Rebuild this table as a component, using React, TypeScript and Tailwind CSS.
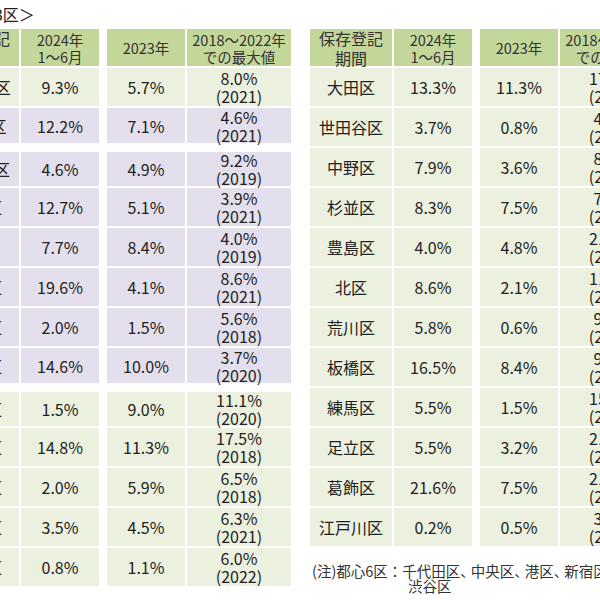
import React from 'react';

type Row = {
  name: string;
  a: string;
  b: string;
  max: string;
  year: string;
  tone: 'g' | 'p';
  size: string;
};

const left: Row[] = [
  { name: '東京23区', a: '9.3%', b: '5.7%', max: '8.0%', year: '2021', tone: 'g', size: 'h-[38px] mt-[2px]' },
  { name: '都心6区', a: '12.2%', b: '7.1%', max: '4.6%', year: '2021', tone: 'p', size: 'h-[35px] mt-[2px]' },
  { name: '千代田区', a: '4.6%', b: '4.9%', max: '9.2%', year: '2019', tone: 'p', size: 'h-[34px] mt-[9px]' },
  { name: '中央区', a: '12.7%', b: '5.1%', max: '3.9%', year: '2021', tone: 'p', size: 'h-[38px] mt-[2px]' },
  { name: '港区', a: '7.7%', b: '8.4%', max: '4.0%', year: '2019', tone: 'p', size: 'h-[38px] mt-[2px]' },
  { name: '新宿区', a: '19.6%', b: '4.1%', max: '8.6%', year: '2021', tone: 'p', size: 'h-[38px] mt-[2px]' },
  { name: '文京区', a: '2.0%', b: '1.5%', max: '5.6%', year: '2018', tone: 'p', size: 'h-[38px] mt-[2px]' },
  { name: '渋谷区', a: '14.6%', b: '10.0%', max: '3.7%', year: '2020', tone: 'p', size: 'h-[35px] mt-[2px]' },
  { name: '台東区', a: '1.5%', b: '9.0%', max: '11.1%', year: '2020', tone: 'g', size: 'h-[34px] mt-[9px]' },
  { name: '墨田区', a: '14.8%', b: '11.3%', max: '17.5%', year: '2018', tone: 'g', size: 'h-[38px] mt-[2px]' },
  { name: '江東区', a: '2.0%', b: '5.9%', max: '6.5%', year: '2018', tone: 'g', size: 'h-[38px] mt-[2px]' },
  { name: '品川区', a: '3.5%', b: '4.5%', max: '6.3%', year: '2021', tone: 'g', size: 'h-[38px] mt-[2px]' },
  { name: '目黒区', a: '0.8%', b: '1.1%', max: '6.0%', year: '2022', tone: 'g', size: 'h-[38px] mt-[2px]' },
];

const std = 'h-[38px] mt-[2px]';

const right: Row[] = [
  { name: '大田区', a: '13.3%', b: '11.3%', max: '17.3%', year: '2018', tone: 'g', size: std },
  { name: '世田谷区', a: '3.7%', b: '0.8%', max: '4.4%', year: '2019', tone: 'g', size: std },
  { name: '中野区', a: '7.9%', b: '3.6%', max: '8.2%', year: '2021', tone: 'g', size: std },
  { name: '杉並区', a: '8.3%', b: '7.5%', max: '7.6%', year: '2019', tone: 'g', size: std },
  { name: '豊島区', a: '4.0%', b: '4.8%', max: '21.2%', year: '2018', tone: 'g', size: std },
  { name: '北区', a: '8.6%', b: '2.1%', max: '11.5%', year: '2020', tone: 'g', size: std },
  { name: '荒川区', a: '5.8%', b: '0.6%', max: '9.8%', year: '2021', tone: 'g', size: std },
  { name: '板橋区', a: '16.5%', b: '8.4%', max: '9.4%', year: '2018', tone: 'g', size: std },
  { name: '練馬区', a: '5.5%', b: '1.5%', max: '15.1%', year: '2019', tone: 'g', size: std },
  { name: '足立区', a: '5.5%', b: '3.2%', max: '21.8%', year: '2019', tone: 'g', size: std },
  { name: '葛飾区', a: '21.6%', b: '7.5%', max: '21.0%', year: '2020', tone: 'g', size: std },
  { name: '江戸川区', a: '0.2%', b: '0.5%', max: '3.3%', year: '2018', tone: 'g', size: std },
];

const wards = ['千代田区', '中央区', '港区', '新宿区', '文京区'];

function Header() {
  const cell = 'bg-[#c4d79b] flex flex-col items-center justify-center text-[#333] whitespace-nowrap';
  return (
    <div className="flex h-[37px]">
      <div className={`${cell} w-[82px] text-[16px] leading-[20px]`}>
        <span>保存登記</span>
        <span>期間</span>
      </div>
      <div className={`${cell} ml-[2px] w-[78px] text-[14.5px] leading-[17px]`}>
        <span>2024年</span>
        <span>1～6月</span>
      </div>
      <div className={`${cell} ml-[8px] w-[78px] text-[14.5px] leading-[17px]`}>
        <span>2023年</span>
      </div>
      <div className={`${cell} ml-[2px] w-[104px] text-[14.5px] leading-[17px]`}>
        <span>2018～2022年</span>
        <span>での最大値</span>
      </div>
    </div>
  );
}

function TableRow({ row }: { row: Row }) {
  const bg = row.tone === 'g' ? 'bg-[#ebf1de]' : 'bg-[#e4dfec]';
  const cell = `${bg} flex items-center justify-center whitespace-nowrap text-[16px]`;
  return (
    <div className={`flex ${row.size}`}>
      <div className={`${cell} w-[82px]`}>{row.name}</div>
      <div className={`${cell} ml-[2px] w-[78px]`}>{row.a}</div>
      <div className={`${cell} ml-[8px] w-[78px]`}>{row.b}</div>
      <div className={`${cell} ml-[2px] w-[104px] flex-col leading-[18px]`}>
        <span>{row.max}</span>
        <span>({row.year})</span>
      </div>
    </div>
  );
}

function Table({ rows, children }: { rows: Row[]; children?: React.ReactNode }) {
  return (
    <div className="flex flex-col w-[354px] shrink-0">
      <Header />
      {rows.map((r) => (
        <TableRow key={r.name} row={r} />
      ))}
      {children}
    </div>
  );
}

export default function App() {
  return (
    <div className="w-[600px] h-[600px] overflow-hidden bg-white text-[#222] font-['Noto_Sans_CJK_JP',sans-serif]">
      <div className="ml-[-63px] w-[760px]">
        <div className="h-[29px] pt-[4px] text-[16px] leading-[20px] whitespace-nowrap">＜東京23区＞</div>
        <div className="flex items-start gap-[19px]">
          <Table rows={left} />
          <Table rows={right}>
            <div className="mt-[17px] ml-[2px] text-[14.5px] leading-[15px] text-[#333] whitespace-nowrap">
              <div>
                (注)都心6区：
                {wards.map((w) => (
                  <React.Fragment key={w}>
                    {w}
                    <span className="tracking-[-4px]">、</span>
                  </React.Fragment>
                ))}
              </div>
              <div className="pl-[96px]">渋谷区</div>
            </div>
          </Table>
        </div>
      </div>
    </div>
  );
}
